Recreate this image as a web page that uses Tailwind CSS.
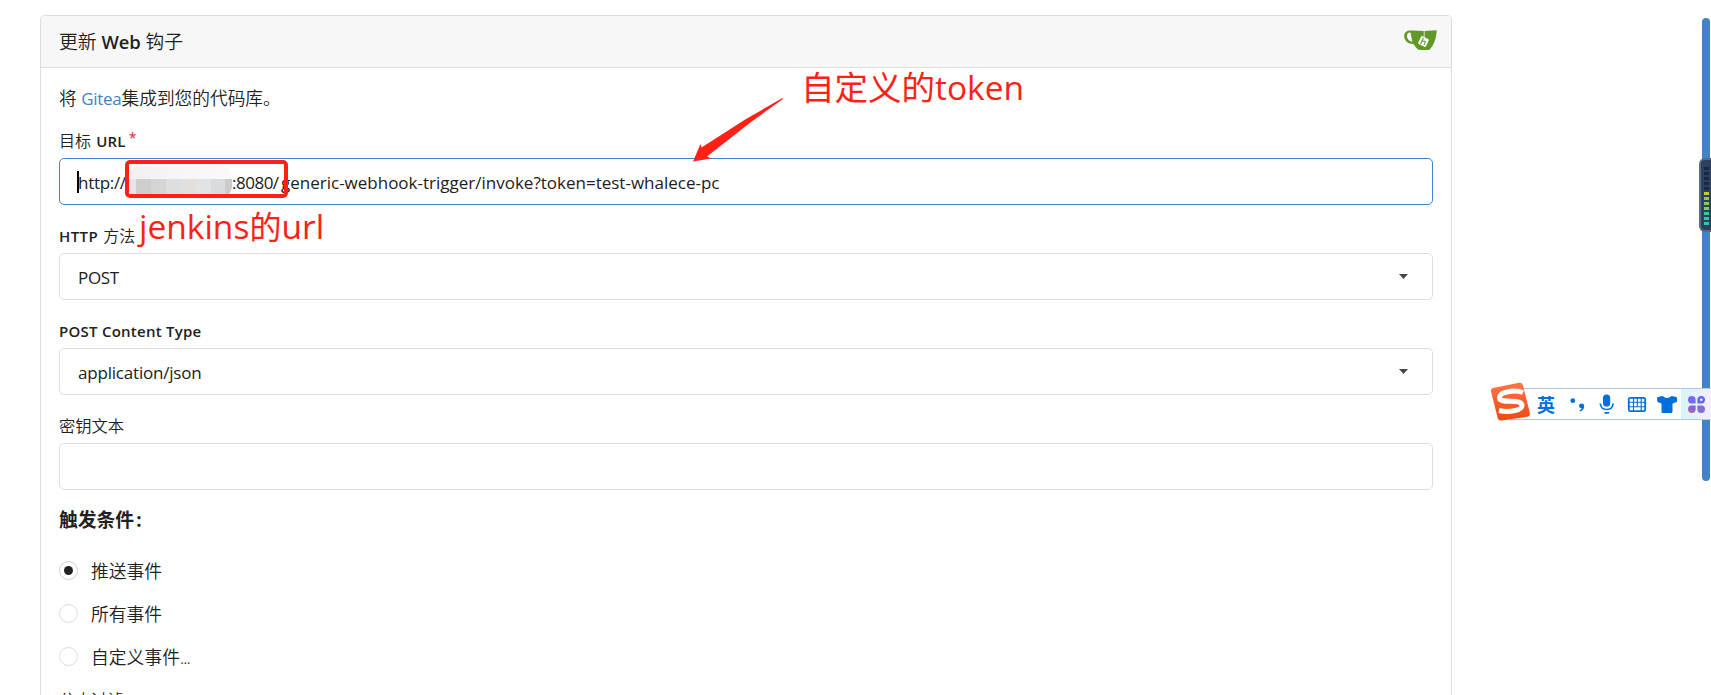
<!DOCTYPE html>
<html lang="zh-CN">
<head>
<meta charset="utf-8">
<title>更新 Web 钩子</title>
<script src="https://cdn.jsdelivr.net/npm/@tailwindcss/browser@4"></script>
</head>
<body class="relative h-[695px] overflow-hidden bg-white text-[#212121] font-['Open_Sans','Noto_Sans_CJK_SC',sans-serif]">
<main class="ml-10 mt-[15px] h-[680px] w-[1412px] overflow-hidden rounded-t-[5px] border border-b-0 border-[#dcdddd]">
  <header class="flex h-[52px] items-center justify-between border-b border-[#dcdddd] bg-[#f7f7f7] pl-[18px] pr-[14px]">
    <h1 class="whitespace-nowrap text-[18.8px] font-[350] leading-[26px]">更新 <span class="text-[18.4px] font-semibold tracking-[-0.1px]">Web</span> 钩子</h1>
    <svg class="mb-1 h-5 w-[33px]" viewBox="0 0 33 20">
      <path d="M8 .5 20 1 32.7.3C32.5 8 29.5 16 25.8 19.4Q25 20 23.5 20H16Q14 20 12 17.5L9.4 14C4 14 0 11 .2 5.5.3 2 3.5 0 8 .5ZM6.5 2.5C4 2.3 3 3.5 3 6c0 3 2 5.3 5.4 5.6Q7.6 8.5 6.5 2.5Z" fill="#609926" fill-rule="evenodd"/>
      <path d="M20.2 1v7" stroke="#c9dbb8" stroke-width="1.2"/>
      <rect x="15.2" y="7.2" width="8.6" height="8.6" rx="1.2" fill="#fff" transform="rotate(26 19.5 11.5)"/>
      <path d="m19.5 8-3 6m1.8-2.7q3-.2 3 .8l-1.2 2.8" fill="none" stroke="#609926" stroke-width="1.1"/>
    </svg>
  </header>
  <form class="flex flex-col px-[18px]">
    <p class="mt-[17px] h-[26px] whitespace-nowrap text-[17.7px] font-[350] leading-[26px]">将 <span class="text-[17px] font-normal tracking-[-0.3px] text-[#4183c4]">Gitea</span>集成到您的代码库。</p>
    <label class="mt-[20px] block h-5 whitespace-nowrap text-[16px] font-[350] leading-5">目标 <span class="ml-px text-[15px] font-semibold tracking-[.2px]">URL</span><span class="relative -top-1 left-[3px] text-[14px] font-normal text-[#db2828]">*</span></label>
    <div class="relative mt-[7px] flex h-[47px] items-center rounded-[5px] border border-[#4183c4] pl-[18px] text-[17px] font-normal">
      <i class="absolute left-[17px] top-[12px] h-[22px] w-[2px] bg-black"></i>
      <span class="w-[50px] whitespace-nowrap pt-0.5 tracking-[-0.3px]">http://</span>
      <span class="flex h-[32px] w-[104px] flex-col overflow-hidden rounded-xl">
        <span class="h-[13px] bg-gradient-to-r from-[#f1f1f1] to-[#fafafa]"></span>
        <span class="flex h-[15px]"><b class="w-[8px] bg-[#e5e5e7]"></b><b class="w-[15px] bg-[#cecece]"></b><b class="w-[15px] bg-[#d5d5d6]"></b><b class="w-[15px] bg-[#dddee0]"></b><b class="w-[15px] bg-[#e3dfdd]"></b><b class="w-[15px] bg-[#e2e3e5]"></b><b class="w-[14px] bg-[#dadbdd]"></b><b class="w-[7px] bg-[#cbcbcc]"></b></span>
        <span class="h-[4px] bg-[#f7f7f7]"></span>
      </span>
      <span class="w-[49px] whitespace-nowrap pt-0.5 tracking-[-0.5px]">:8080/</span>
      <span class="whitespace-nowrap pt-0.5">generic-webhook-trigger/invoke?token=test-whalece-pc</span>
    </div>
    <label class="mt-[21px] block h-5 whitespace-nowrap text-[16px] font-[350] leading-5"><span class="text-[15px] font-semibold tracking-[.4px]">HTTP</span> <span class="ml-px">方法</span></label>
    <div class="mt-[7px] flex h-[47px] items-center justify-between rounded-[5px] border border-[#dcdddd] pl-[18px] pr-[24px] text-[17px] font-normal"><span class="pt-0.5 tracking-[-0.3px]">POST</span><svg class="h-[5px] w-[9px]" viewBox="0 0 9 5"><path d="M0 0h9L4.5 5z" fill="#484848"/></svg></div>
    <label class="mt-[21px] block h-5 whitespace-nowrap text-[15px] font-semibold leading-[20px] tracking-[.25px]">POST Content Type</label>
    <div class="mt-[7px] flex h-[47px] items-center justify-between rounded-[5px] border border-[#dcdddd] pl-[18px] pr-[24px] text-[17px] font-normal"><span class="pt-0.5 tracking-[-0.2px]">application/json</span><svg class="h-[5px] w-[9px]" viewBox="0 0 9 5"><path d="M0 0h9L4.5 5z" fill="#484848"/></svg></div>
    <label class="mt-[21px] block h-5 whitespace-nowrap text-[16.3px] font-[350] leading-5">密钥文本</label>
    <div class="mt-[7px] h-[47px] rounded-[5px] border border-[#dcdddd]"></div>
    <h2 class="mt-[16px] h-7 whitespace-nowrap text-[18.8px] font-bold leading-7">触发条件<span class="ml-0.5">:</span></h2>
    <div class="mt-[25px] flex h-[43px] items-start text-[17.8px] font-[350] leading-[24px]"><i class="mr-[13px] mt-[2px] flex size-[19px] items-center justify-center rounded-full border border-[#cfd0d1]"><b class="size-[9px] rounded-full bg-[#212121]"></b></i>推送事件</div>
    <div class="flex h-[43px] items-start text-[17.8px] font-[350] leading-[24px]"><i class="mr-[13px] mt-[2px] size-[19px] rounded-full border border-[#dcdddd]"></i>所有事件</div>
    <div class="flex h-[43px] items-start text-[17.8px] font-[350] leading-[24px]"><i class="mr-[13px] mt-[2px] size-[19px] rounded-full border border-[#dcdddd]"></i>自定义事件<span class="tracking-[-0.9px]">...</span></div>
    <label class="mt-[2px] h-5 whitespace-nowrap text-[16.2px] font-[350] leading-5">分支过滤</label>
  </form>
</main>

<!-- Annotations -->
<div class="absolute left-[125px] top-[160px] h-[38px] w-[163px] rounded-[5px] border-4 border-[#ff2116]"></div>
<p class="absolute left-[139px] top-[202px] whitespace-nowrap text-[33.5px] leading-[48px] text-[#ff2116]">jenkins<span class="text-[32px]">的</span>url</p>
<p class="absolute left-[801px] top-[63px] whitespace-nowrap text-[33.5px] leading-[48px] text-[#ff2116]">自定义的token</p>
<svg class="absolute left-[690px] top-[95px] h-[70px] w-[96px]" viewBox="0 0 96 70"><path d="M92.5 3 56 24 11.500 52.500 10.500 49 3 66.500 21 63.500 17 61.500 61 27 93 4Z" fill="#ff2116"/></svg>

<!-- Scroll bar and level meter -->
<div class="absolute left-[1702px] top-[18px] h-[463px] w-2 rounded-full bg-[#4183c4]"></div>
<div class="absolute left-[1699px] top-[158px] h-[74px] w-3 rounded-l-md border-2 border-r-0 border-[#5a6a80] bg-[#2c405f]">
  <svg class="ml-[3px] mt-[7px] h-[58px] w-[5px]" viewBox="0 0 5 58"><path d="M2.5 0v25" stroke="#182a42" stroke-width="5" stroke-dasharray="3 2"/><path d="M2.5 25v5" stroke="#c5ca45" stroke-width="5" stroke-dasharray="3 2"/><path d="M2.5 30v15" stroke="#89c65d" stroke-width="5" stroke-dasharray="3 2"/><path d="M2.5 45v13" stroke="#31c9a3" stroke-width="5" stroke-dasharray="3 2"/></svg>
</div>

<!-- Input method bar -->
<div class="absolute left-[1510px] top-[388px] flex h-8 w-[201px] items-center border-y border-[#b5c7de] bg-white text-[#006fdb]">
  <span class="ml-[27px] w-[33px] pt-0.5 text-[18px] font-bold leading-6">英</span>
  <svg class="h-[30px] w-[141px]" viewBox="1570 389 141 30" fill="currentColor">
    <circle cx="1572.8" cy="400.7" r="2.4"/>
    <path d="M1579 406.2a2.6 2.6 0 1 1 5.2 0q0 4-4.5 5.2v-1.2q1.8-.7 2-2.2-2.7.2-2.7-1.8Z"/>
    <rect x="1603" y="394.5" width="7.2" height="12" rx="3.6"/>
    <path d="M1600.2 403.5q.8 6 6.5 6t6.5-6" fill="none" stroke="currentColor" stroke-width="1.7"/><rect x="1604.3" y="412" width="5" height="1.8" rx=".8"/>
    <rect x="1628.8" y="397.8" width="16.4" height="13.4" rx="1.5" fill="none" stroke="currentColor" stroke-width="1.8"/>
    <path d="M1629 402.3h16M1629 406.7h16M1633.5 398v13M1637.3 398v9M1641.2 398v13" fill="none" stroke="currentColor" stroke-width="1.1"/>
    <path d="M1662.5 396q4.5 4 9 0l5 1q1 1 .3 5l-4.3 1.5v8q0 1.5-1.5 1.5h-8q-1.500 0-1.500-1.500v-8l-4-1.500q-.8-4 0-5Z"/>
    <defs><linearGradient id="pane"><stop stop-color="#d5f5f7"/><stop offset="1" stop-color="#f5edff"/></linearGradient><linearGradient id="leaf" x1="0" y1="1" x2=".5" y2="0"><stop stop-color="#ce6280"/><stop offset="1" stop-color="#6d66f1"/></linearGradient></defs>
    <rect x="1681" y="389" width="30" height="30" fill="url(#pane)"/>
    <path d="M1695.600 403.600h-4a3.800 3.800 0 1 1 4-4Z" fill="#7768f0"/><path d="M1697.400 403.600v-4a3.800 3.800 0 1 1 4 4Z" fill="#6468f5"/><path d="M1695.600 405.400h-4a3.800 3.800 0 1 0 4 4Z" fill="url(#leaf)"/><path d="M1697.400 405.400v4a3.800 3.800 0 1 0 4-4Z" fill="#8769d8"/><circle cx="1701.300" cy="399.700" r="1.300" fill="#fff"/>
  </svg>
</div>
<svg class="absolute left-[1490px] top-[382px] h-[40px] w-[41px]" viewBox="0 0 41 40">
  <defs><linearGradient id="badge" x1="0" y1="0" x2="0" y2="1"><stop stop-color="#ff7548"/><stop offset="1" stop-color="#ed4b10"/></linearGradient></defs>
  <path d="M3 6 29 .8q3-.6 3.800 2.200L39.900 31q.5 3-2.400 3.800L12 38.500q-3.500.5-4.200-2L1 9.500Q.5 6.700 3 6Z" fill="url(#badge)"/>
  <path d="M33 10.500C25 7.500 9 9.500 9.500 16c.5 6 22 .5 22.500 7 .4 6-14 7.500-23 5.500" fill="none" stroke="#fff" stroke-width="5"/>
</svg>
</body>
</html>
